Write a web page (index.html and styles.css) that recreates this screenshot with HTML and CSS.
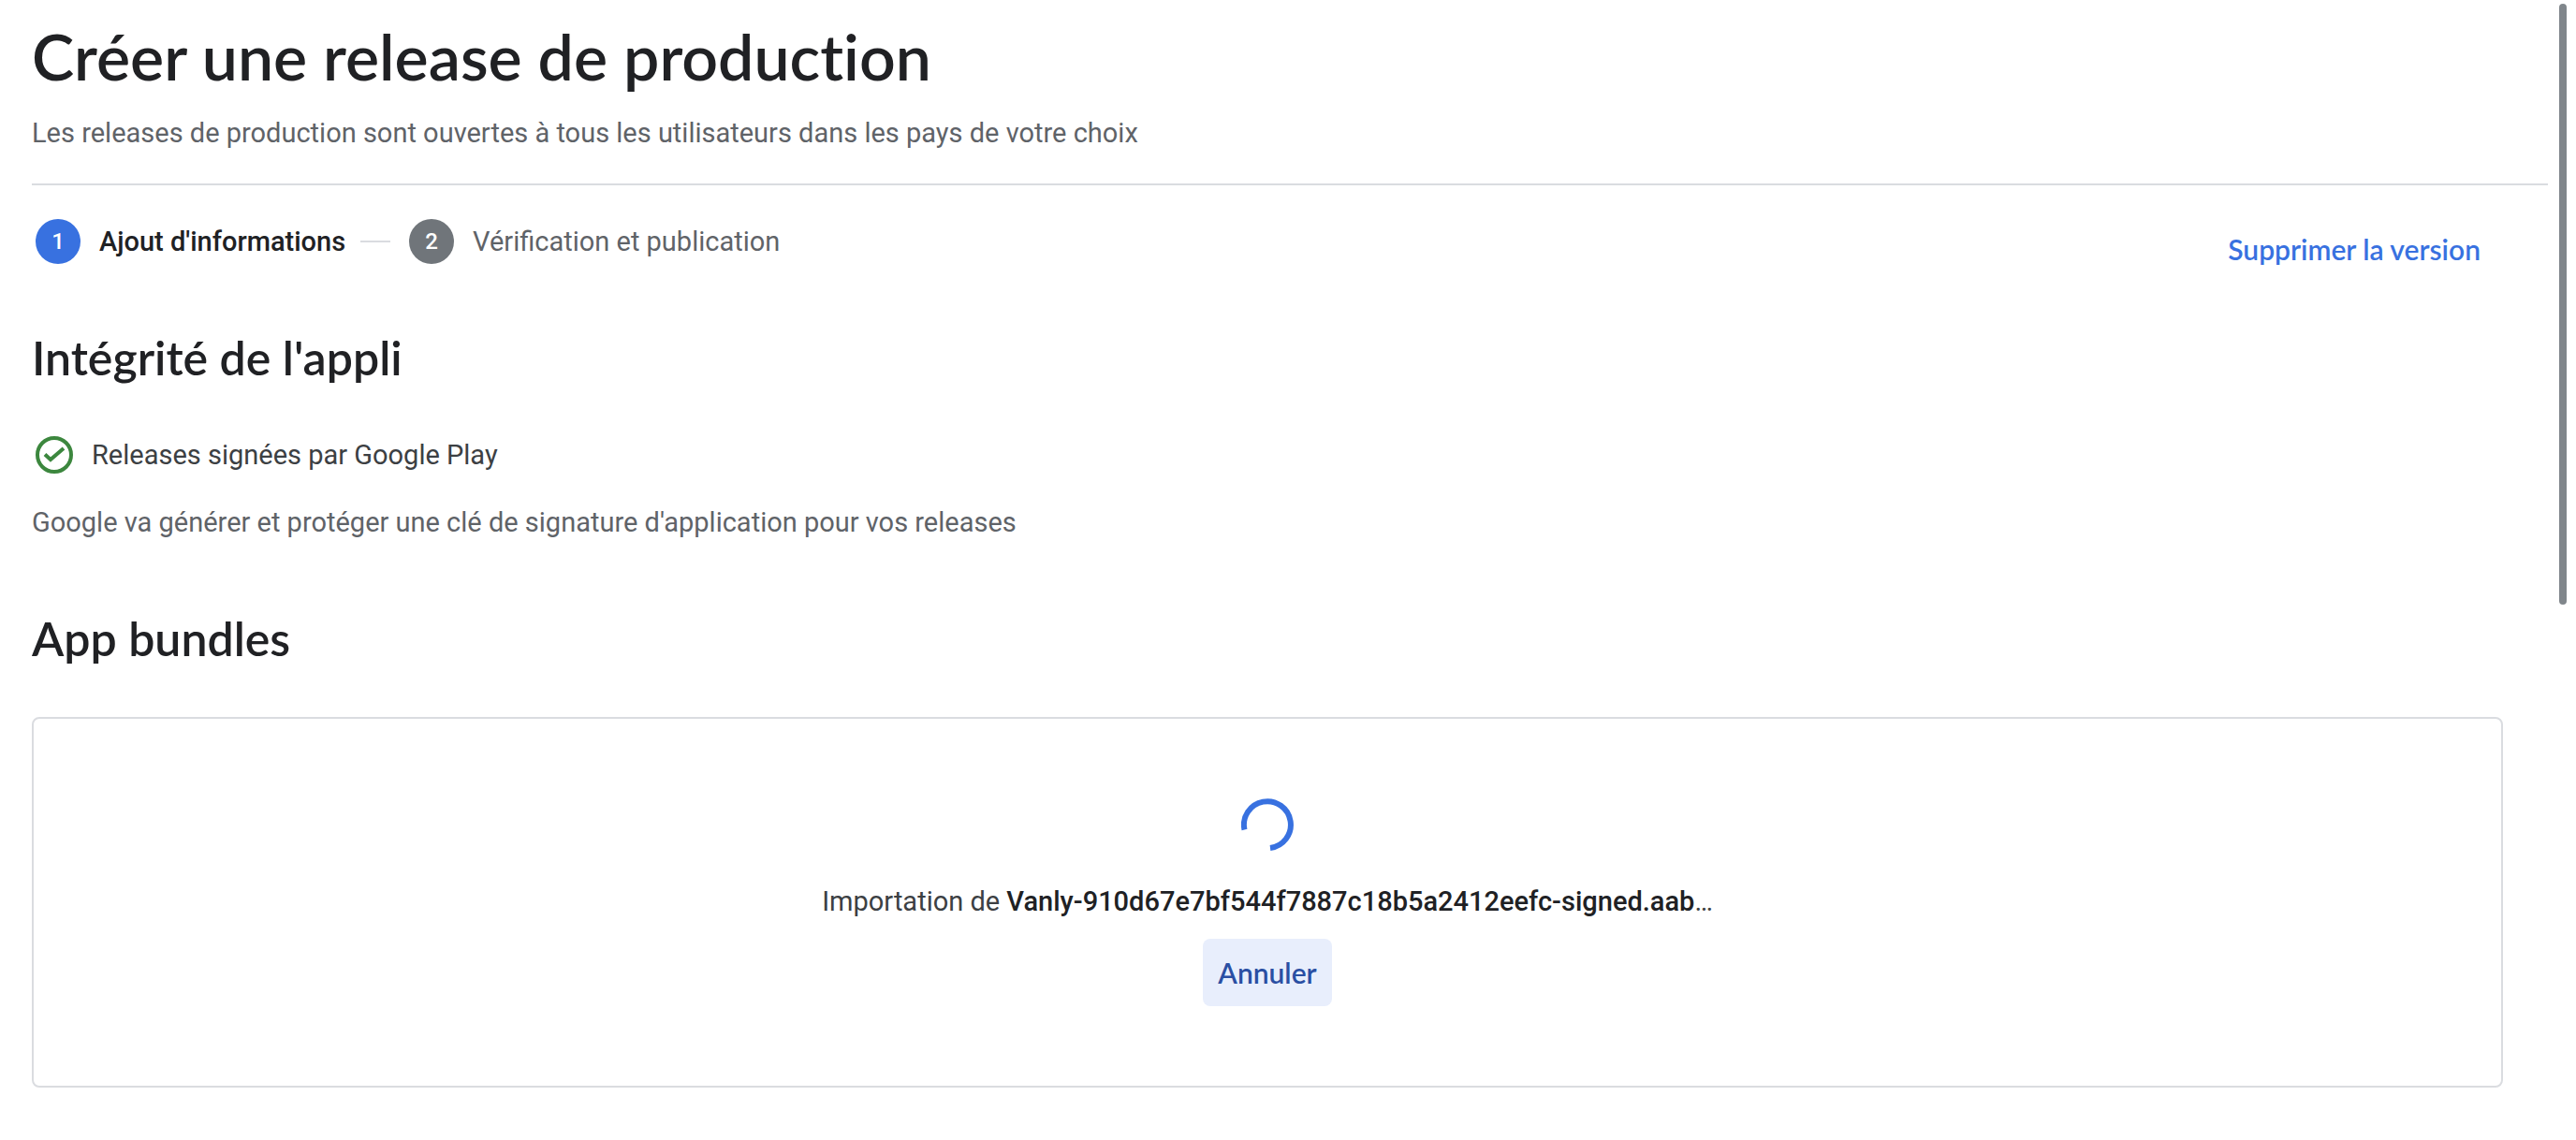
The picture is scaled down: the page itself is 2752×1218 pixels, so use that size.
FILE: index.html
```html
<!DOCTYPE html>
<html lang="fr">
<head>
<meta charset="utf-8">
<title>Créer une release de production</title>
<meta name="viewport" content="width=device-width, initial-scale=1">
<link rel="stylesheet" href="styles.css">
</head>
<body>
<main class="page">
  <header class="page-header">
    <h1 class="page-title">Créer une release de production</h1>
    <p class="text">Les releases de production sont ouvertes à tous les utilisateurs dans les pays de votre choix</p>
  </header>

  <div class="content">
    <div class="toolbar">
      <ol class="steps">
        <li class="step step-active"><span class="step-number">1</span><span>Ajout d'informations</span></li>
        <li class="step-line" aria-hidden="true"></li>
        <li class="step"><span class="step-number">2</span><span>Vérification et publication</span></li>
      </ol>
      <a class="delete-link" href="#supprimer">Supprimer la version</a>
    </div>

    <section class="section">
      <h2 class="section-title">Intégrité de l'appli</h2>
      <p class="status">
        <svg class="status-icon" viewBox="0 0 40 40" aria-hidden="true">
          <circle cx="20" cy="20" r="18" fill="none" stroke="#3c873e" stroke-width="4"/>
          <path d="M10 19.500 16 25 30 13" fill="none" stroke="#3c873e" stroke-width="4"/>
        </svg>
        <span>Releases signées par Google Play</span>
      </p>
      <p class="text">Google va générer et protéger une clé de signature d'application pour vos releases</p>
    </section>

    <section class="section">
      <h2 class="section-title">App bundles</h2>
      <div class="upload">
        <svg class="spinner" viewBox="0 0 56 56" role="img" aria-label="Importation en cours">
          <path d="M3.500 33.500A25 25 0 1 1 31 53" fill="none" stroke="#3871e0" stroke-width="6"/>
        </svg>
        <p class="upload-text">Importation de <strong class="file-name">Vanly-910d67e7bf544f7887c18b5a2412eefc-signed.aab</strong>…</p>
        <button class="cancel" type="button">Annuler</button>
      </div>
    </section>
  </div>
</main>
<div class="scroll-thumb" aria-hidden="true"></div>
</body>
</html>
```
FILE: styles.css
```css
* {
  box-sizing: border-box;
}

body {
  margin: 0;
  background: #fff;
  color: #3c4043;
  font-family: Roboto, "Liberation Sans", sans-serif;
  font-size: 29px;
  line-height: 40px;
}

h1, h2, p, ol {
  margin: 0;
  padding: 0;
}

.page {
  padding: 16px 30px 56px 34px;
}

.page-header {
  padding-bottom: 34px;
  border-bottom: 2px solid #dadce0;
}

.page-title,
.section-title,
.delete-link,
.cancel {
  font-family: "Google Sans", "Product Sans", Lato, sans-serif;
  font-variant-ligatures: none;
}

.page-title,
.section-title {
  color: #202124;
  font-weight: 600;
}

.page-title {
  margin-bottom: 18px;
  font-size: 68px;
  line-height: 88px;
}

.section-title {
  margin: 64px 0 52px;
  font-size: 50px;
  line-height: 64px;
}

.text {
  color: #5f6368;
}

.content {
  padding-right: 48px;
}

.toolbar {
  display: flex;
  justify-content: space-between;
  align-items: flex-end;
  padding: 36px 24px 0 4px;
}

.steps {
  display: flex;
  align-items: center;
  padding-bottom: 4px;
  list-style: none;
}

.step {
  display: flex;
  align-items: center;
  gap: 20px;
  color: #5f6368;
}

.step-number {
  display: flex;
  justify-content: center;
  width: 48px;
  border-radius: 50%;
  background: #70757a;
  color: #fff;
  font-size: 24px;
  font-weight: 500;
  line-height: 48px;
}

.step-active {
  color: #202124;
  font-weight: 500;
}

.step-active .step-number {
  background: #3871e0;
}

.step-line {
  width: 32px;
  height: 2px;
  margin: 0 20px 0 16px;
  background: #dadce0;
}

.delete-link {
  color: #3871e0;
  font-size: 30px;
  font-weight: 600;
  text-decoration: none;
}

.section {
  display: flow-root;
  margin-bottom: 8px;
}

.status {
  display: flex;
  align-items: center;
  gap: 20px;
  margin-bottom: 32px;
  padding-left: 4px;
}

.status-icon {
  width: 40px;
  height: 40px;
}

.upload {
  display: flex;
  flex-direction: column;
  align-items: center;
  padding: 85px 24px;
  border: 2px solid #dadce0;
  border-radius: 8px;
}

.spinner {
  width: 56px;
  height: 56px;
  margin-bottom: 34px;
}

.upload-text {
  margin-bottom: 20px;
}

.file-name {
  color: #202124;
  font-weight: 500;
}

.cancel {
  padding: 16px;
  border: 0;
  border-radius: 8px;
  background: #e8eefc;
  color: #2a4fa3;
  font-size: 30px;
  font-weight: 600;
  line-height: 40px;
}

.scroll-thumb {
  position: fixed;
  top: 4px;
  right: 10px;
  bottom: 47%;
  width: 8px;
  border-radius: 4px;
  background: #80868b;
}
```
